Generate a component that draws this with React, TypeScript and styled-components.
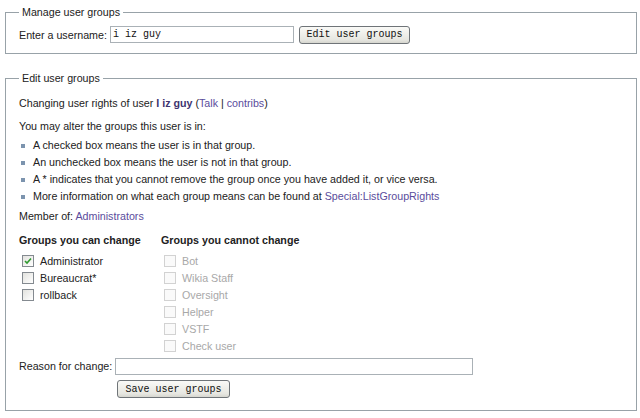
import React from "react";
import styled, { createGlobalStyle } from "styled-components";

const GlobalStyle = createGlobalStyle`
  html, body {
    margin: 0;
    padding: 0;
    background: #ffffff;
  }
  body {
    font-family: "Liberation Sans", Arial, sans-serif;
    font-size: 10.7px;
    color: #222222;
  }
`;

const Page = styled.div`
  padding: 5px 3px 0 5px;
`;

const Box = styled.fieldset<{ $gap?: number; $top?: number; $bottom?: number }>`
  margin: ${(p) => p.$gap ?? 0}px 0 0 0;
  padding: ${(p) => p.$top ?? 7}px 13px ${(p) => p.$bottom ?? 10}px 13px;
  border: 1px solid #98a2a8;
  min-width: 0;
`;

const Legend = styled.legend`
  padding: 0 3px;
  line-height: 14px;
  font-size: 10.7px;
`;

const Row = styled.div`
  display: flex;
  align-items: center;
  height: 17px;
`;

const Prompt = styled.span`
  margin-right: 3px;
`;

const TextInput = styled.input<{ $width: number }>`
  box-sizing: border-box;
  width: ${(p) => p.$width}px;
  height: 17px;
  margin: 0;
  padding: 0 2px;
  border: 1px solid #aab1b6;
  font-family: "Liberation Mono", "Courier New", monospace;
  font-size: 10px;
  color: #111;
  outline: none;
`;

const Button = styled.button<{ $width: number }>`
  box-sizing: border-box;
  width: ${(p) => p.$width}px;
  height: 18px;
  margin: 0 0 0 5px;
  padding: 0;
  border: 1px solid #6f7478;
  border-radius: 3px;
  background: linear-gradient(#fafaf7, #e6e6e0 80%, #d6d6cf);
  font-family: "Liberation Mono", "Courier New", monospace;
  font-size: 10px;
  color: #111;
`;

const Para = styled.p<{ $top: number }>`
  margin: ${(p) => p.$top}px 0 0 0;
  line-height: 17px;
`;

const Link = styled.a<{ $strong?: boolean }>`
  color: ${(p) => (p.$strong ? "#3d3470" : "#5a4c9c")};
  font-weight: ${(p) => (p.$strong ? "bold" : "normal")};
  text-decoration: none;
`;

const Bullets = styled.ul`
  list-style: none;
  margin: 2px 0 0 0;
  padding: 0;
`;

const Bullet = styled.li`
  position: relative;
  padding-left: 14px;
  line-height: 17px;

  &::before {
    content: "";
    position: absolute;
    left: 2px;
    top: 7px;
    width: 4px;
    height: 4px;
    background: #7c94ae;
  }
`;

const Groups = styled.div`
  display: grid;
  grid-template-columns: 142px auto;
  margin-top: 7px;
`;

const Column = styled.div`
  display: flex;
  flex-direction: column;
`;

const Heading = styled.div`
  font-weight: bold;
  line-height: 17px;
  margin-bottom: 3px;
`;

const CheckRow = styled.label<{ $disabled?: boolean }>`
  display: flex;
  align-items: center;
  gap: 6px;
  height: 17px;
  padding-left: 3px;
  color: ${(p) => (p.$disabled ? "#a8a8a8" : "#222")};
`;

const Tick = styled.span<{ $disabled?: boolean }>`
  box-sizing: border-box;
  display: inline-flex;
  align-items: center;
  justify-content: center;
  width: 12px;
  height: 12px;
  border: 1px solid ${(p) => (p.$disabled ? "#d2d2d2" : "#848a90")};
  background: ${(p) => (p.$disabled ? "#fafafa" : "linear-gradient(135deg, #e2e2de, #ffffff)")};
`;

const FormGrid = styled.div`
  display: grid;
  grid-template-columns: 96px auto;
  row-gap: 5px;
  margin-top: 4px;
  align-items: center;
`;

const Label = styled.span`
  line-height: 17px;
`;

const ButtonCell = styled.div`
  grid-column: 2;
  margin-left: -3px;
`;

type Group = { name: string; checked?: boolean };

const canChange: Group[] = [
  { name: "Administrator", checked: true },
  { name: "Bureaucrat*" },
  { name: "rollback" },
];

const cannotChange: Group[] = [
  { name: "Bot" },
  { name: "Wikia Staff" },
  { name: "Oversight" },
  { name: "Helper" },
  { name: "VSTF" },
  { name: "Check user" },
];

function Check({ checked, disabled }: { checked?: boolean; disabled?: boolean }) {
  return (
    <Tick $disabled={disabled}>
      {checked && (
        <svg width="8" height="8" viewBox="0 0 8 8">
          <path d="M1 4 L3 6 L7 1.5" fill="none" stroke="#2f9a2f" strokeWidth="1.6" />
        </svg>
      )}
    </Tick>
  );
}

export default function App() {
  return (
    <Page>
      <GlobalStyle />
      <Box>
        <Legend>Manage user groups</Legend>
        <Row>
          <Prompt>Enter a username:</Prompt>
          <TextInput $width={184} defaultValue="i iz guy" />
          <Button $width={111}>Edit user groups</Button>
        </Row>
      </Box>

      <Box $gap={17} $top={10} $bottom={12}>
        <Legend>Edit user groups</Legend>
        <Para $top={0}>
          Changing user rights of user <Link $strong>I iz guy</Link> (<Link>Talk</Link> |{" "}
          <Link>contribs</Link>)
        </Para>
        <Para $top={6}>You may alter the groups this user is in:</Para>
        <Bullets>
          <Bullet>A checked box means the user is in that group.</Bullet>
          <Bullet>An unchecked box means the user is not in that group.</Bullet>
          <Bullet>A * indicates that you cannot remove the group once you have added it, or vice versa.</Bullet>
          <Bullet>
            More information on what each group means can be found at{" "}
            <Link>Special:ListGroupRights</Link>
          </Bullet>
        </Bullets>
        <Para $top={3}>
          Member of: <Link>Administrators</Link>
        </Para>

        <Groups>
          <Column>
            <Heading>Groups you can change</Heading>
            {canChange.map((g) => (
              <CheckRow key={g.name}>
                <Check checked={g.checked} />
                {g.name}
              </CheckRow>
            ))}
          </Column>
          <Column>
            <Heading>Groups you cannot change</Heading>
            {cannotChange.map((g) => (
              <CheckRow key={g.name} $disabled>
                <Check disabled />
                {g.name}
              </CheckRow>
            ))}
          </Column>
        </Groups>

        <FormGrid>
          <Label>Reason for change:</Label>
          <TextInput $width={358} />
          <ButtonCell>
            <Button $width={113}>Save user groups</Button>
          </ButtonCell>
        </FormGrid>
      </Box>
    </Page>
  );
}
